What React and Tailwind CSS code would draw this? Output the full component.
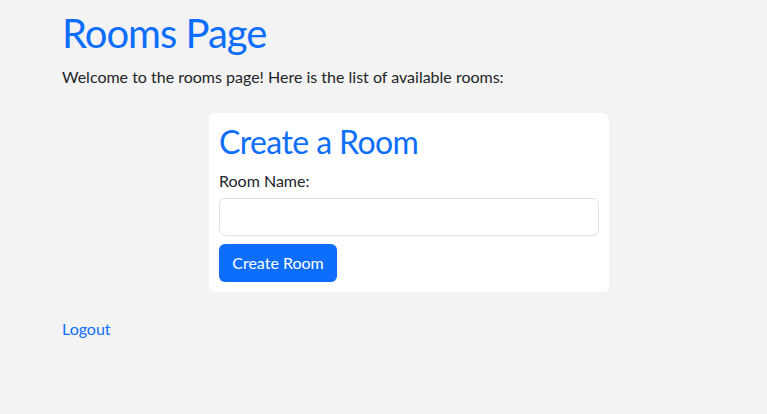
import React, { useState } from "react";

export default function App() {
  const [roomName, setRoomName] = useState("");

  return (
    <div
      className="min-h-[414px] bg-[#f3f3f3] pl-[62px] pr-[11px] pt-[9px] text-[#212529]"
      style={{ fontFamily: 'Lato, "Noto Sans", sans-serif' }}
    >
      <h1 className="mb-2 text-[40px] leading-[1.2] font-normal tracking-[-1px] text-[#0d6efd]">
        Rooms Page
      </h1>
      <p className="mb-6 text-base leading-6">
        Welcome to the rooms page! Here is the list of available rooms:
      </p>

      <div className="mx-auto w-[400px] rounded-md bg-white p-[10px]">
        <h2 className="mb-2 text-[32px] leading-[1.2] font-normal tracking-[-0.6px] text-[#0d6efd]">
          Create a Room
        </h2>
        <label className="block text-base leading-6">Room Name:</label>
        <input
          type="text"
          value={roomName}
          onChange={(e) => setRoomName(e.target.value)}
          className="mt-[5px] block h-[38px] w-full rounded-md border border-[#dee2e6] bg-white px-3 outline-none"
        />
        <button className="mt-2 h-[38px] w-[118px] rounded-md bg-[#0d6efd] text-base text-white">
          Create Room
        </button>
      </div>

      <div className="mt-[25px]">
        <a href="#" className="text-base leading-6 text-[#0d6efd]">
          Logout
        </a>
      </div>
    </div>
  );
}
